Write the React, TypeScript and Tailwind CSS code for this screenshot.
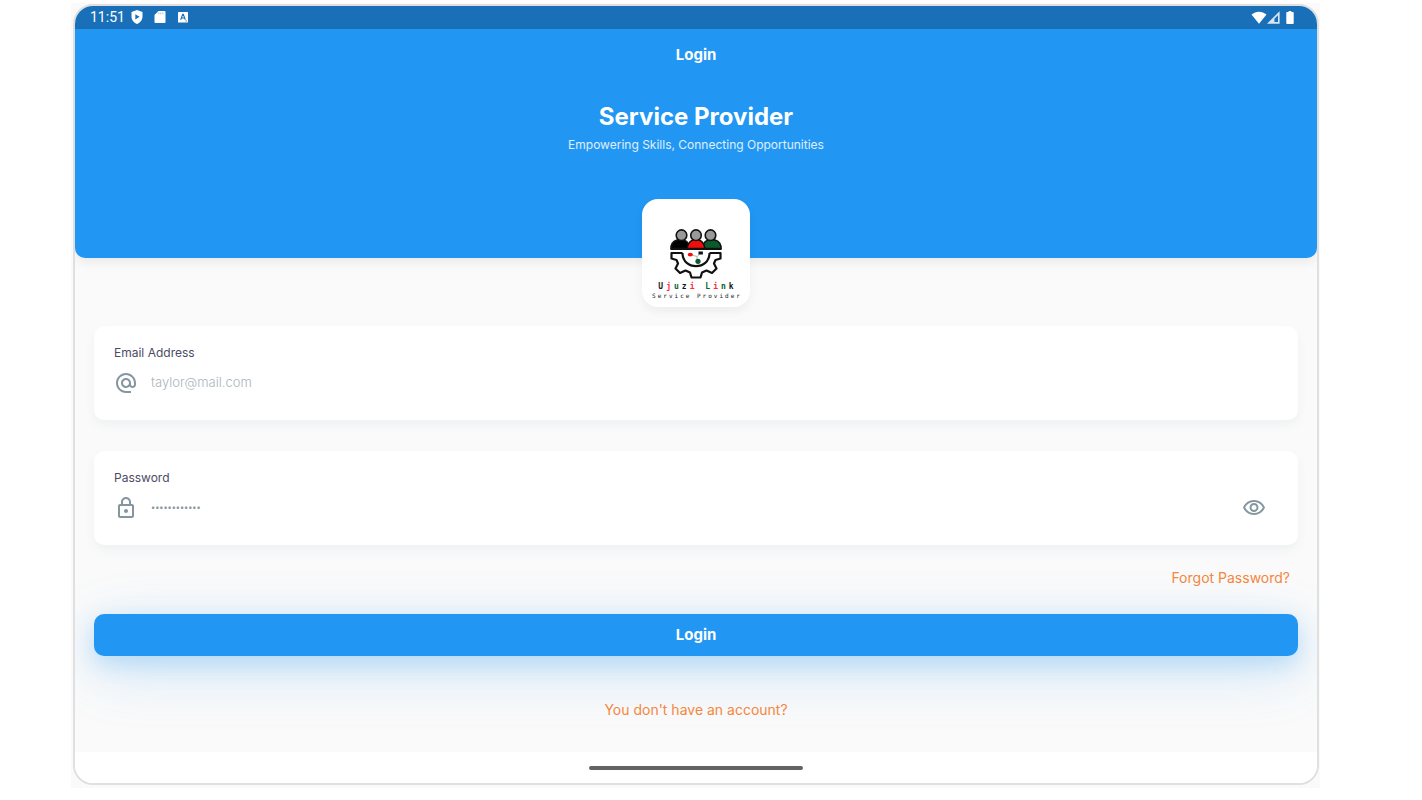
import { useState } from "react";

const logoName = [
  { text: "U", color: "text-neutral-900" },
  { text: "j", color: "text-red-500" },
  { text: "u", color: "text-green-800" },
  { text: "z", color: "text-neutral-900" },
  { text: "i", color: "text-red-500" },
  { text: " ", color: "" },
  { text: "L", color: "text-green-800" },
  { text: "i", color: "text-red-500" },
  { text: "n", color: "text-green-800" },
  { text: "k", color: "text-neutral-900" },
];

function StatusBar() {
  return (
    <div className="flex h-[23px] items-center justify-between bg-[#1a70b8] pr-[23px] pb-px pl-[15px] text-white">
      <div className="flex items-center gap-[6px]">
        <span className="font-['Roboto',sans-serif] text-sm leading-none">11:51</span>
        <div className="flex items-center gap-[11px]">
          {/* Play protect */}
          <svg aria-hidden="true" className="h-[14px] w-3" viewBox="0 0 12 14">
            <path d="M6 0L11.5 2V6.5C11.5 10 9.2 12.8 6 14C2.8 12.8.5 10 .5 6.5V2Z" fill="#fff" />
            <path d="M4.3 4.2L8.6 6.8L4.3 9.4Z" fill="#1a70b8" />
          </svg>
          {/* SD card */}
          <svg aria-hidden="true" className="h-3 w-3" viewBox="0 0 12 12">
            <path d="M4.5 0H10.5Q11.5 0 11.5 1V11Q11.5 12 10.5 12H1.5Q.5 12 .5 11V4Z" fill="#fff" />
            <path d="M4.8 1.5V3.2M6.8 1.5V3.2M8.8 1.5V3.2" stroke="#9cc0df" strokeWidth="1" />
          </svg>
          <svg aria-hidden="true" className="h-3 w-3" viewBox="0 0 12 12">
            <rect x="1" y="1" width="10" height="10.5" rx=".6" fill="#fff" />
            <path d="M3.7 8.8L5.7 3.4H6.3L8.3 8.8M4.4 7H7.6" fill="none" stroke="#1a70b8" strokeWidth="1.1" />
            <path d="M8.5 10H10" stroke="#1a70b8" strokeWidth=".8" />
          </svg>
        </div>
      </div>
      <div className="flex items-center">
        <svg aria-hidden="true" className="h-[13px] w-4" viewBox="0 0 16 13">
          <path d="M.5 3.6C4.8-.3 11.2-.3 15.5 3.6L8 12.8Z" fill="#fff" />
        </svg>
        <svg aria-hidden="true" className="h-[13px] w-[13px]" viewBox="0 0 13 13">
          <path d="M12.6.2V12.8H0Z" fill="#d7e6f3" />
          <path d="M7.4 7.8L11 4.2V11H7.4Z" fill="#1a70b8" />
        </svg>
        <svg aria-hidden="true" className="ml-[6px] h-[13px] w-2" viewBox="0 0 8 14">
          <path d="M2.5 0H5.5V1.2H7Q8 1.2 8 2.2V13Q8 14 7 14H1Q0 14 0 13V2.2Q0 1.2 1 1.2H2.5Z" fill="#fff" />
        </svg>
      </div>
    </div>
  );
}

function Logo() {
  return (
    <div className="flex h-[108px] w-[108px] flex-col items-center rounded-2xl bg-white pt-[30px] shadow-[0_5px_10px_rgba(0,0,0,0.05)]">
      <svg aria-hidden="true" className="h-[50px] w-[52px] shrink-0" viewBox="0 0 52 50">
        {/* People */}
        <g stroke="#111" strokeWidth="1.6">
          <path d="M1 19.5V17.5Q2.5 10.5 10.5 10.5T20 19.5Z" fill="#000" />
          <path d="M51 19.5V17.5Q49.5 10.5 41.5 10.5T32 19.5Z" fill="#0b5a2c" />
          <path d="M17 19.5Q18.5 10.5 26 10.5T35 19.5Z" fill="#f20d0d" />
          <circle cx="11.5" cy="6.2" r="5.3" fill="#999" />
          <circle cx="26" cy="6.2" r="5.3" fill="#999" />
          <circle cx="40.5" cy="6.2" r="5.3" fill="#999" />
        </g>
        <path d="M.5 20.2H51.5" stroke="#111" strokeWidth="1.8" />
        {/* Half gear */}
        <g fill="none" stroke="#111" strokeWidth="2.2" strokeLinejoin="round">
          <path d="M12.5 24H1.5V29.5L6.5 31L8 34.5L5.5 39.5L10 44L15.5 41.5L20 43.5L21.5 48.5H30.5L32 43.5L36.5 41.5L42 44L46.5 39.5L44 34.5L45.5 31L50.5 29.5V24H39.5" />
          <path d="M12.5 24C12.5 41.5 39.5 41.5 39.5 24" />
        </g>
        {/* Network */}
        <path d="M20 25.5L27 27.5L31 24M27 27.5V33" stroke="#999" strokeWidth=".7" fill="none" />
        <ellipse cx="20.3" cy="25.6" rx="2.6" ry="1.9" fill="#f20d0d" />
        <rect x="28.5" y="22.5" width="4.4" height="3" fill="#111" />
        <circle cx="28" cy="32.3" r="2.6" fill="#0b5a2c" />
      </svg>
      <p className="mt-[3px] pl-[3px] font-['DejaVu_Sans_Mono',monospace] text-[8px] leading-[9px] font-bold tracking-[3px] whitespace-pre">
        {logoName.map((l, i) => (
          <span key={i} className={l.color}>
            {l.text}
          </span>
        ))}
      </p>
      <p className="pl-[2px] font-['DejaVu_Sans_Mono',monospace] text-[6px] leading-[9px] tracking-[2px] whitespace-nowrap text-neutral-900">
        Service Provider
      </p>
    </div>
  );
}

export default function App() {
  const [visible, setVisible] = useState(false);

  return (
    <div className="min-h-screen bg-white pt-[3px] pr-[102px] pl-[71px] font-['Inter',sans-serif]">
      <div className="bg-[#fafafa] pt-px pr-px pb-[3px] pl-[2px]">
        <div className="overflow-hidden rounded-[20px] border-2 border-[#e0e0e0] bg-[#fafafa]">
          <StatusBar />

          <header className="rounded-b-[10px] bg-[#2196f3] pt-4 pb-[103px] text-center text-white shadow-[0_5px_10px_rgba(0,0,0,0.06)]">
            <p className="text-[15px] leading-5 font-bold">Login</p>
            <h1 className="mt-9 text-2xl leading-8 font-bold">Service Provider</h1>
            <p className="mt-[2px] text-xs leading-5 text-white/85">Empowering Skills, Connecting Opportunities</p>
          </header>

          <div className="-mt-[59px] flex justify-center">
            <Logo />
          </div>

          <form className="px-[19px] pt-[19px] pb-8" onSubmit={(e) => e.preventDefault()}>
            <div className="rounded-[10px] bg-white px-5 pt-[17px] pb-6 shadow-[0_5px_10px_rgba(120,144,156,0.08)]">
              <label htmlFor="email" className="block text-xs leading-5 text-[#4b4b63]">
                Email Address
              </label>
              <div className="mt-[7px] flex h-[26px] items-center">
                <svg aria-hidden="true" className="h-6 w-6 shrink-0" viewBox="0 0 24 24" fill="#8496a0">
                  <path d="M12 1.95c-5.52 0-10 4.48-10 10s4.48 10 10 10h5v-2h-5c-4.34 0-8-3.66-8-8s3.66-8 8-8 8 3.66 8 8v1.43c0 .79-.71 1.57-1.5 1.57s-1.5-.78-1.5-1.57v-1.43c0-2.76-2.24-5-5-5s-5 2.24-5 5 2.24 5 5 5c1.38 0 2.64-.56 3.54-1.47.65.89 1.77 1.47 2.96 1.47 1.97 0 3.5-1.6 3.5-3.57v-1.43c0-5.52-4.48-10-10-10zm0 13c-1.66 0-3-1.34-3-3s1.34-3 3-3 3 1.34 3 3-1.34 3-3 3z" />
                </svg>
                <input
                  id="email"
                  type="email"
                  placeholder="taylor@mail.com"
                  className="ml-[13px] min-w-0 flex-1 bg-transparent text-[13px] font-light outline-none placeholder:text-[#a9b5bb]"
                />
              </div>
            </div>

            <div className="mt-[31px] rounded-[10px] bg-white px-5 pt-[17px] pb-6 shadow-[0_5px_10px_rgba(120,144,156,0.08)]">
              <label htmlFor="password" className="block text-xs leading-5 text-[#4b4b63]">
                Password
              </label>
              <div className="mt-[7px] flex h-[26px] items-center">
                <svg aria-hidden="true" className="h-6 w-6 shrink-0" viewBox="0 0 24 24" fill="#8496a0">
                  <path d="M18 8h-1V6c0-2.76-2.24-5-5-5S7 3.24 7 6v2H6c-1.1 0-2 .9-2 2v10c0 1.1.9 2 2 2h12c1.1 0 2-.9 2-2V10c0-1.1-.9-2-2-2zM9 6c0-1.66 1.34-3 3-3s3 1.34 3 3v2H9V6zm9 14H6V10h12v10zm-6-3c1.1 0 2-.9 2-2s-.9-2-2-2-2 .9-2 2 .9 2 2 2z" />
                </svg>
                <input
                  id="password"
                  type={visible ? "text" : "password"}
                  placeholder="••••••••••••"
                  className="ml-[13px] min-w-0 flex-1 bg-transparent font-['Open_Sans',sans-serif] text-[11px] outline-none placeholder:text-[#8496a0]"
                />
                <button
                  type="button"
                  aria-label="Toggle password visibility"
                  className="mr-3 shrink-0"
                  onClick={() => setVisible(!visible)}
                >
                  <svg aria-hidden="true" className="h-6 w-6" viewBox="0 0 24 24" fill="#8496a0">
                    <path d="M12 6c3.79 0 7.17 2.13 8.82 5.5C19.17 14.87 15.79 17 12 17s-7.17-2.13-8.82-5.5C4.83 8.13 8.21 6 12 6m0-2C7 4 2.73 7.11 1 11.5 2.73 15.89 7 19 12 19s9.27-3.11 11-7.5C21.27 7.11 17 4 12 4zm0 5c1.38 0 2.5 1.12 2.5 2.5S13.38 14 12 14s-2.5-1.12-2.5-2.5S10.62 9 12 9m0-2c-2.48 0-4.5 2.02-4.5 4.5S9.52 16 12 16s4.5-2.02 4.5-4.5S14.48 7 12 7z" />
                  </svg>
                </button>
              </div>
            </div>

            <div className="mt-[23px] flex justify-end pr-2">
              <a href="#forgot" className="text-sm leading-5 text-[#f5873d]">
                Forgot Password?
              </a>
            </div>

            <button
              type="submit"
              className="mt-[26px] h-[42px] w-full rounded-[10px] bg-[#2196f3] text-[15px] leading-5 font-bold text-white shadow-[0_15px_60px_rgba(33,150,243,0.2),0_8px_25px_rgba(33,150,243,0.25)]"
            >
              Login
            </button>

            <div className="relative mt-11 flex justify-center">
              <a href="#register" className="text-sm leading-5 text-[#f5873d]">
                You don't have an account?
              </a>
            </div>
          </form>

          <div className="relative flex h-[31px] items-center justify-center bg-white">
            <div className="h-1 w-[214px] rounded-full bg-[#606462]" />
          </div>
        </div>
      </div>
    </div>
  );
}
